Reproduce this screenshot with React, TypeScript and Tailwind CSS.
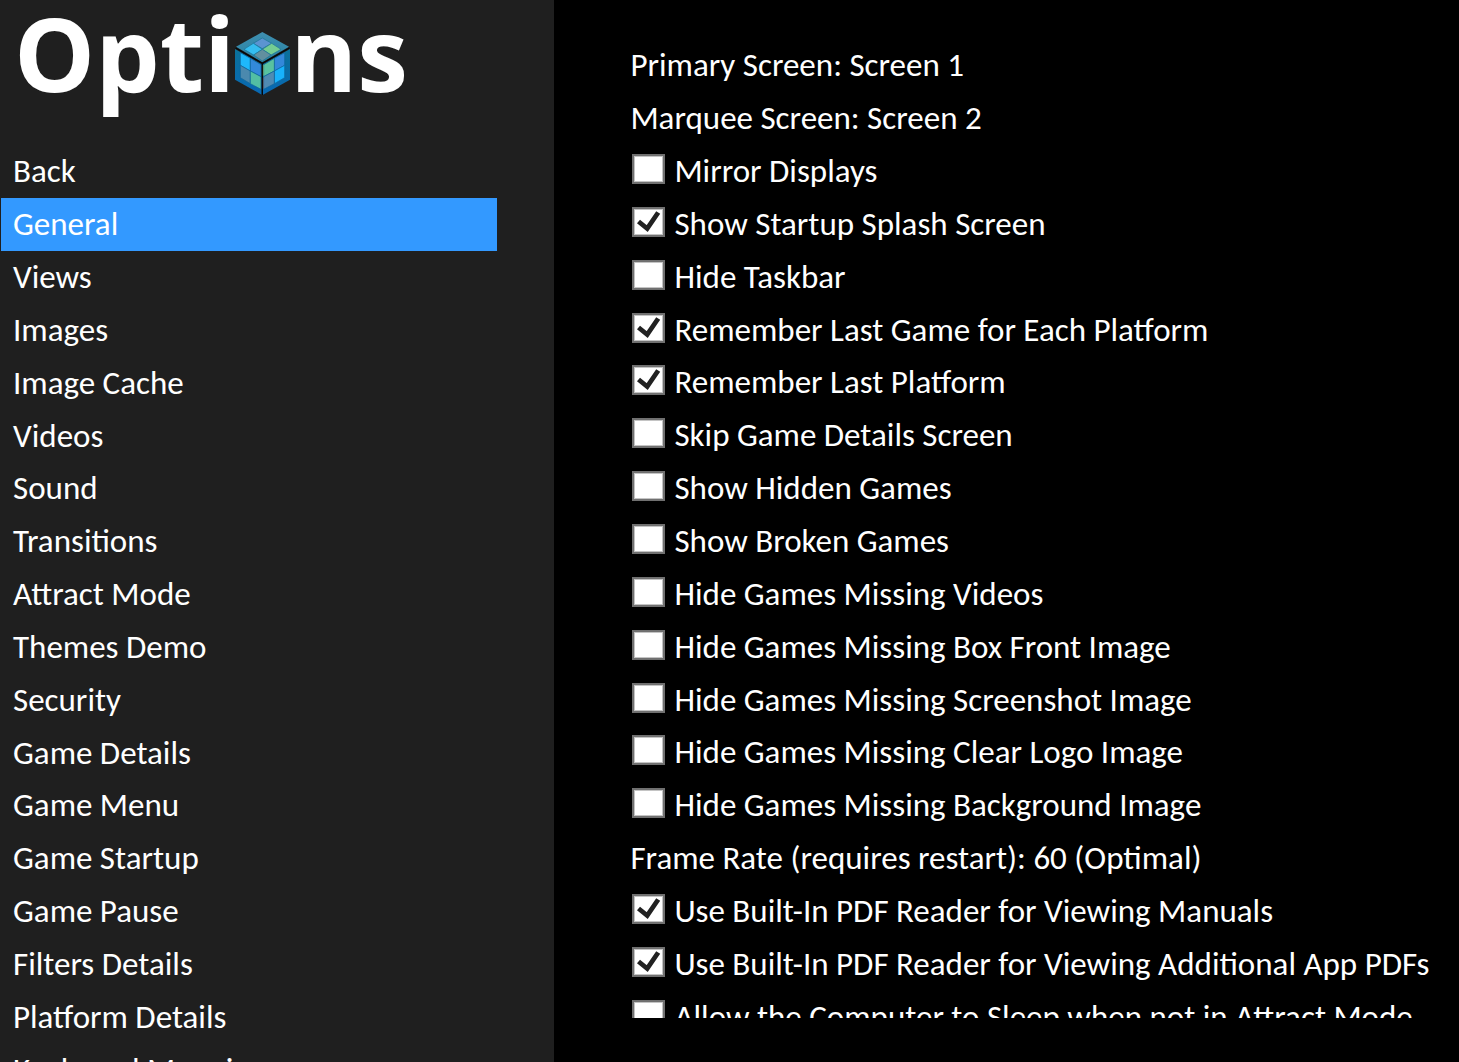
import { useState } from "react";

const sections = [
  "Back",
  "General",
  "Views",
  "Images",
  "Image Cache",
  "Videos",
  "Sound",
  "Transitions",
  "Attract Mode",
  "Themes Demo",
  "Security",
  "Game Details",
  "Game Menu",
  "Game Startup",
  "Game Pause",
  "Filters Details",
  "Platform Details",
  "Keyboard Mappings",
];

type Option = { label: string; checked?: boolean };

const options: Option[] = [
  { label: "Primary Screen: Screen 1" },
  { label: "Marquee Screen: Screen 2" },
  { label: "Mirror Displays", checked: false },
  { label: "Show Startup Splash Screen", checked: true },
  { label: "Hide Taskbar", checked: false },
  { label: "Remember Last Game for Each Platform", checked: true },
  { label: "Remember Last Platform", checked: true },
  { label: "Skip Game Details Screen", checked: false },
  { label: "Show Hidden Games", checked: false },
  { label: "Show Broken Games", checked: false },
  { label: "Hide Games Missing Videos", checked: false },
  { label: "Hide Games Missing Box Front Image", checked: false },
  { label: "Hide Games Missing Screenshot Image", checked: false },
  { label: "Hide Games Missing Clear Logo Image", checked: false },
  { label: "Hide Games Missing Background Image", checked: false },
  { label: "Frame Rate (requires restart): 60 (Optimal)" },
  { label: "Use Built-In PDF Reader for Viewing Manuals", checked: true },
  { label: "Use Built-In PDF Reader for Viewing Additional App PDFs", checked: true },
  { label: "Allow the Computer to Sleep when not in Attract Mode", checked: false },
];

function Cube() {
  return (
    <svg viewBox="34 35 165 189" className="h-[63px] w-[55px]" role="img" aria-label="o">
      <defs>
        <linearGradient id="side" x1="0" y1="0" x2="0" y2="1">
          <stop offset="0" stopColor="#0b7199" />
          <stop offset="1" stopColor="#0868b4" />
        </linearGradient>
        <linearGradient id="lid" x1="0" y1="0" x2="0" y2="1">
          <stop offset="0" stopColor="#3f8fb0" />
          <stop offset="1" stopColor="#2781a3" />
        </linearGradient>
      </defs>
      <path d="M116 35 196 79 116 126 37 79Z" fill="url(#lid)" />
      <path d="M34 86 114 132V223L34 178Z" fill="url(#side)" />
      <path d="M199 86 118 132V223L199 178Z" fill="url(#side)" />
      <g stroke="#1b7295" strokeWidth="2">
        <path d="M116 53 144 69 116 85 89 69Z" fill="#5b94d1" />
        <path d="M89 69 116 87 90 104 61 87Z" fill="#34bdf0" />
        <path d="M144 69 172 87 142 104 116 87Z" fill="#74cc93" />
        <path d="M116 87 142 104 116 122 90 104Z" fill="#628f9f" />
      </g>
      <g stroke="#0c659c" strokeWidth="2">
        <path d="M50 97 80 114V152L50 135Z" fill="#1eb8fb" />
        <path d="M80 114 112 133V169L80 152Z" fill="#3389da" />
        <path d="M50 135 80 152V190L50 172Z" fill="#4b89ae" />
        <path d="M80 152 112 169V207L80 190Z" fill="#52bfa3" />
        <path d="M183 97 152 114V152L183 135Z" fill="#3388da" />
        <path d="M152 114 120 133V169L152 152Z" fill="#58c2a0" />
        <path d="M183 135 152 152V190L183 172Z" fill="#18b2fc" />
        <path d="M152 152 120 169V207L152 190Z" fill="#508bb3" />
      </g>
      <path d="M36 83 116 129 197 83M116 129V224" fill="none" stroke="#050709" strokeWidth="4" />
      <path d="M119 134V166" stroke="#b8ca3d" strokeWidth="1.5" />
      <path d="M119 172V205" stroke="#9a5347" strokeWidth="1.5" />
    </svg>
  );
}

function CheckRow({ option }: { option: Option }) {
  return (
    <label className="flex items-center gap-[9px] whitespace-nowrap pl-0.5">
      <span className="mb-1 grid shrink-0">
        <input
          type="checkbox"
          defaultChecked={option.checked}
          className="peer col-start-1 row-start-1 h-[30px] w-[33px] appearance-none border-2 border-[#707070] bg-white shadow-[inset_0_0_0_1px_#c4c4c4]"
        />
        <svg
          viewBox="0 0 33 30"
          className="pointer-events-none invisible col-start-1 row-start-1 h-[30px] w-[33px] peer-checked:visible"
          aria-hidden="true"
        >
          <path d="M6.5 14.5 15.2 21.5 26.2 5.5" fill="none" stroke="#212121" strokeWidth="4.8" />
        </svg>
      </span>
      {option.label}
    </label>
  );
}

export default function App() {
  const [selected, setSelected] = useState("General");
  return (
    <div className="flex h-screen overflow-hidden bg-black font-[Calibri,Carlito,Lato,sans-serif] text-[33px] leading-10 text-white">
      <aside className="flex w-[38%] shrink-0 flex-col overflow-hidden bg-[#1f1f1f]">
        <h1 className="flex h-[145px] shrink-0 items-start pl-3.5 font-['Open_Sans',sans-serif] text-[102px] leading-[106px] font-bold">
          <span>Opti</span>
          <span className="mt-8">
            <Cube />
          </span>
          <span>ns</span>
        </h1>
        <nav className="mr-[57px] ml-px grid h-[951px] shrink-0 auto-rows-fr">
          {sections.map((name) => (
            <button
              key={name}
              type="button"
              onClick={() => setSelected(name)}
              className={name === selected ? "bg-[#3399ff] px-3 text-left" : "px-3 text-left"}
            >
              {name}
            </button>
          ))}
        </nav>
      </aside>
      <main className="mt-[39px] mb-11 ml-[76px] min-w-0 flex-1 overflow-hidden">
        <div className="grid h-[1004px] auto-rows-fr">
          {options.map((option) =>
            option.checked === undefined ? (
              <button key={option.label} type="button" className="text-left whitespace-nowrap">
                {option.label}
              </button>
            ) : (
              <CheckRow key={option.label} option={option} />
            ),
          )}
        </div>
      </main>
    </div>
  );
}
